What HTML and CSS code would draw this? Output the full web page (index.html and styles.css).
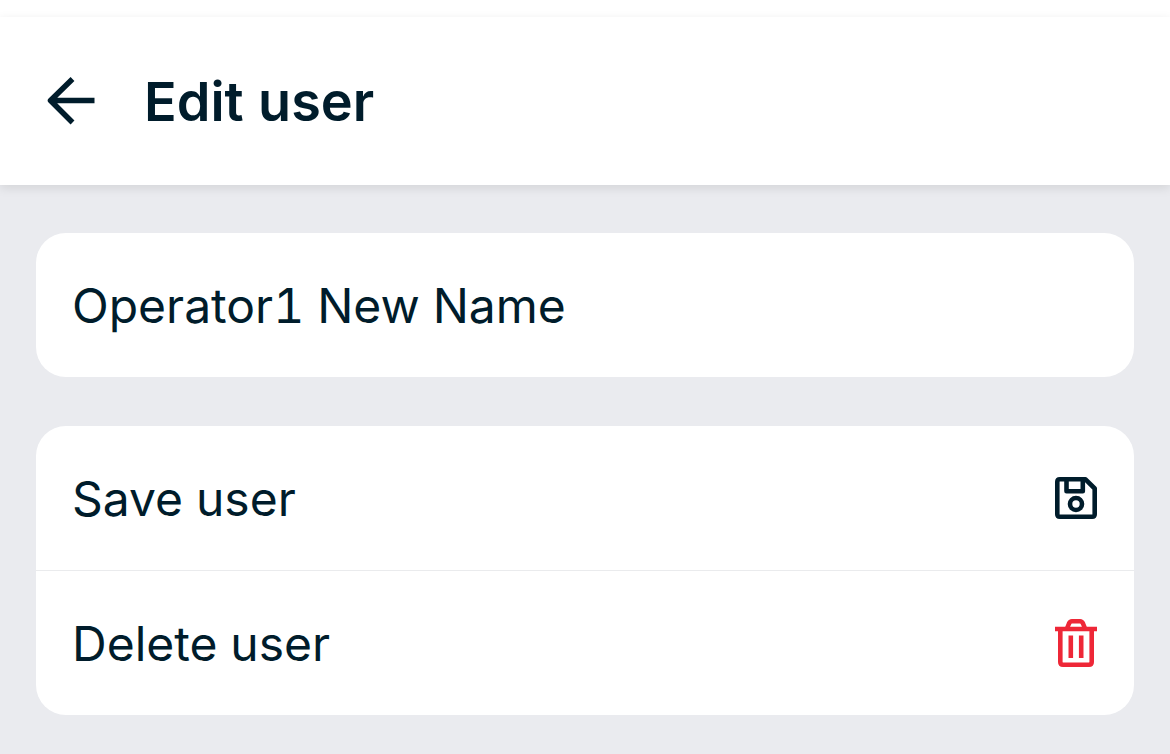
FILE: index.html
```html
<!DOCTYPE html>
<html lang="en">
<head>
    <meta charset="UTF-8">
    <meta name="viewport" content="width=device-width, initial-scale=1.0">
    <title>Edit user</title>
    <link rel="stylesheet" href="styles.css">
</head>
<body>
    <div class="status-bar"></div>
    <header class="header">
        <button type="button" class="back" aria-label="Back">
            <svg width="48" height="48" viewBox="0 0 48 48" fill="none" stroke="currentColor" stroke-width="5.500" stroke-linejoin="round">
                <path d="M47.500 23.500H5M25.500 2L3.500 23.500L25.500 45.500"/>
            </svg>
        </button>
        <h1>Edit user</h1>
    </header>

    <form class="content" id="editForm">
        <div class="card">
            <input type="text" class="row" id="userName" aria-label="User name" value="Operator1 New Name">
        </div>

        <div class="card">
            <button type="submit" class="row">
                Save user
                <svg width="42" height="42" viewBox="0 0 42 42" fill="none" stroke="currentColor" stroke-width="4.600" stroke-linejoin="round">
                    <path d="M4.800 2.300H30.500L39.700 11.500V37.200Q39.700 39.700 37.200 39.700H4.800Q2.300 39.700 2.300 37.200V4.800Q2.300 2.300 4.800 2.300Z"/>
                    <path d="M11.500 2.300V14.200H27.800V2.300"/>
                    <circle cx="21" cy="27" r="6"/>
                </svg>
            </button>
            <button type="button" class="row delete">
                Delete user
                <svg width="42" height="48" viewBox="0 0 42 48" fill="none" stroke="currentColor" stroke-width="4.600" stroke-linejoin="round">
                    <path d="M0 10H42"/>
                    <path d="M5.300 10V43Q5.300 45.700 8 45.700H34Q36.700 45.700 36.700 43V10"/>
                    <path d="M12 9.500L14 4.500Q15 2.300 17 2.300H25Q27 2.300 28 4.500L30 9.500"/>
                    <path d="M15.800 16.500V39M26.200 16.500V39"/>
                </svg>
            </button>
        </div>
    </form>
</body>
</html>
```

FILE: styles.css
```css
* {
    box-sizing: border-box;
}

body {
    margin: 0;
    font-family: Inter, sans-serif;
    font-variant-numeric: tabular-nums;
    color: #001c2b;
    background-color: #eaebef;
}

.status-bar {
    height: 17px;
    background-color: #fff;
}

.header {
    display: flex;
    align-items: center;
    gap: 49px;
    height: 168px;
    padding: 0 47px;
    background-color: #fff;
    box-shadow: 0 3px 10px rgba(0, 0, 0, 0.1);
}

h1 {
    margin: 0;
    font-size: 54px;
    font-weight: 600;
}

button {
    border: none;
    background: none;
    color: inherit;
    font-family: inherit;
    cursor: pointer;
}

svg {
    display: block;
}

.back {
    padding: 0;
}

.content {
    display: flex;
    flex-direction: column;
    gap: 49px;
    padding: 48px 36px;
}

.card {
    background-color: #fff;
    border-radius: 30px;
    overflow: hidden;
}

.row {
    display: flex;
    align-items: center;
    justify-content: space-between;
    width: 100%;
    height: 144px;
    padding: 0 37px 0 36px;
    border: none;
    background: none;
    color: inherit;
    font-family: inherit;
    font-size: 48px;
    font-variant-numeric: inherit;
}

.delete {
    height: 145px;
    border-top: 1px solid #eaebed;
}

.delete svg {
    color: #ee2737;
}
```
